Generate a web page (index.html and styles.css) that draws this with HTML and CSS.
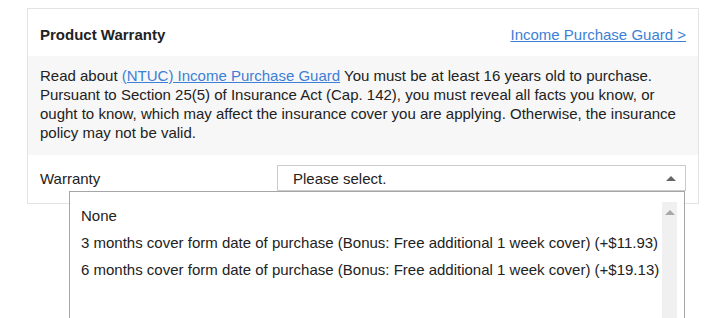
FILE: index.html
```html
<!DOCTYPE html>
<html lang="en">
<head>
  <meta charset="UTF-8">
  <title>Product Warranty</title>
  <link rel="stylesheet" href="styles.css">
</head>
<body>
  <main class="page">
    <section class="card">
      <!-- Header -->
      <div class="card-head">
        <h2>Product Warranty</h2>
        <a href="#">Income Purchase Guard &gt;</a>
      </div>

      <!-- Notice -->
      <div class="notice">
        Read about <a href="#">(NTUC) Income Purchase Guard</a> You must be at least 16 years old to purchase.
        Pursuant to Section 25(5) of Insurance Act (Cap. 142), you must reveal all facts you know, or
        ought to know, which may affect the insurance cover you are applying. Otherwise, the insurance
        policy may not be valid.
      </div>

      <!-- Warranty select -->
      <div class="field">
        <label>Warranty</label>
        <div class="select">
          <span>Please select.</span>
          <span class="caret"></span>
        </div>

        <div class="dropdown">
          <ul class="options">
            <li>None</li>
            <li>3 months cover form date of purchase (Bonus: Free additional 1 week cover) (+$11.93)</li>
            <li>6 months cover form date of purchase (Bonus: Free additional 1 week cover) (+$19.13)</li>
          </ul>
          <div class="scrollbar"><span class="caret light"></span></div>
        </div>
      </div>
    </section>
  </main>
</body>
</html>
```

FILE: styles.css
```css
:root {
  --text-color: #222222;
  --link-blue: #3d7fd6;
  --border-gray: #e3e3e3;
  --notice-bg: #f7f7f7;
  --font-sans: "Liberation Sans", Arial, sans-serif;
}
*, *::before, *::after {
  box-sizing: border-box;
  margin: 0;
  padding: 0;
}
html, body {
  height: 100%;
}
body {
  font-family: var(--font-sans);
  font-size: 15px;
  line-height: 19px;
  color: var(--text-color);
  background: #ffffff;
}
.page {
  min-height: 100%;
  padding: 8px 21px 0 27px;
}
.card {
  border: 1px solid var(--border-gray);
  background: #ffffff;
}
.card-head {
  display: flex;
  justify-content: space-between;
  align-items: baseline;
  padding: 16px 12px 12px;
}
.card-head h2 {
  font-size: 15px;
  font-weight: bold;
  line-height: 19px;
}
a {
  color: var(--link-blue);
  text-decoration: underline;
}
.notice {
  background: var(--notice-bg);
  padding: 10px 12px 13px;
}
.field {
  position: relative;
  display: grid;
  grid-template-columns: 237px 1fr;
  align-items: center;
  padding: 10px 12px 12px;
}
.select {
  display: flex;
  justify-content: space-between;
  align-items: center;
  height: 26px;
  border: 1px solid #cccccc;
  padding: 0 9px 0 15px;
  background: #ffffff;
}
.caret {
  width: 0;
  height: 0;
  border-left: 5px solid transparent;
  border-right: 5px solid transparent;
  border-bottom: 5px solid #666666;
}
.caret.light {
  border-bottom-color: #a8a8a8;
}
.dropdown {
  position: absolute;
  top: 36px;
  left: 41px;
  right: 13px;
  height: 127px;
  display: flex;
  padding: 10px 7px 0 11px;
  background: #ffffff;
  border: 1px solid #a6a6a6;
  border-bottom: none;
  z-index: 1;
}
.options {
  flex: 1;
  list-style: none;
}
.options li {
  line-height: 27px;
  white-space: nowrap;
}
.scrollbar {
  width: 15px;
  background: #f0f0f0;
  display: flex;
  justify-content: center;
  padding-top: 8px;
}
```
